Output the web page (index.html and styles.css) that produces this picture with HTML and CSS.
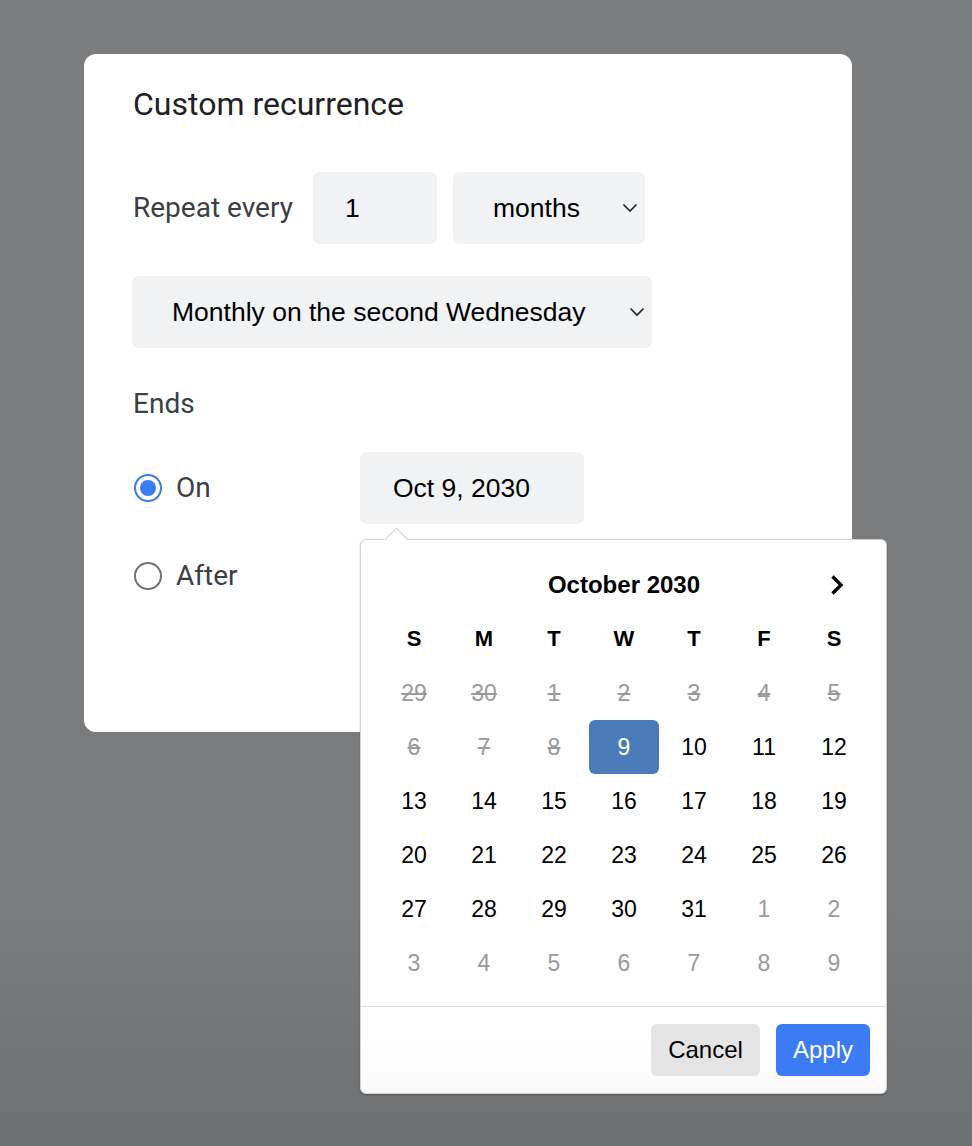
FILE: index.html
```html
<!DOCTYPE html>
<html>
<head>
<meta charset="utf-8">
<link rel="stylesheet" href="styles.css">
</head>
<body>
<div class="dialog">
  <h1 class="title">Custom recurrence</h1>
  <div class="repeat-row">
    <span class="label">Repeat every</span>
    <div class="field num">1</div>
    <div class="field select unit">months
      <svg class="chev" width="16" height="10" viewBox="0 0 16 10"><path d="M1.5 1.5 L8 8 L14.5 1.5" fill="none" stroke="#222" stroke-width="1.6"/></svg>
    </div>
  </div>
  <div class="field select pattern">Monthly on the second Wednesday
    <svg class="chev" width="16" height="10" viewBox="0 0 16 10"><path d="M1.5 1.5 L8 8 L14.5 1.5" fill="none" stroke="#222" stroke-width="1.6"/></svg>
  </div>
  <div class="ends label">Ends</div>
  <div class="end-row">
    <div class="radio-wrap"><span class="radio checked"></span><span class="label">On</span></div>
    <div class="date-anchor">
      <div class="field date">Oct 9, 2030</div>
      <div class="popup">
        <span class="arrow"></span>
        <div class="cal-head">
          <span class="month">October 2030</span>
          <svg class="next" width="16" height="22" viewBox="0 0 16 22"><path d="M3.5 2.5 L12 11 L3.5 19.5" fill="none" stroke="#000" stroke-width="3.4"/></svg>
        </div>
        <div class="grid">
          <span class="wd">S</span><span class="wd">M</span><span class="wd">T</span><span class="wd">W</span><span class="wd">T</span><span class="wd">F</span><span class="wd">S</span>
          <span class="d dis">29</span><span class="d dis">30</span><span class="d dis">1</span><span class="d dis">2</span><span class="d dis">3</span><span class="d dis">4</span><span class="d dis">5</span>
          <span class="d dis">6</span><span class="d dis">7</span><span class="d dis">8</span><span class="d sel">9</span><span class="d">10</span><span class="d">11</span><span class="d">12</span>
          <span class="d">13</span><span class="d">14</span><span class="d">15</span><span class="d">16</span><span class="d">17</span><span class="d">18</span><span class="d">19</span>
          <span class="d">20</span><span class="d">21</span><span class="d">22</span><span class="d">23</span><span class="d">24</span><span class="d">25</span><span class="d">26</span>
          <span class="d">27</span><span class="d">28</span><span class="d">29</span><span class="d">30</span><span class="d">31</span><span class="d out">1</span><span class="d out">2</span>
          <span class="d out">3</span><span class="d out">4</span><span class="d out">5</span><span class="d out">6</span><span class="d out">7</span><span class="d out">8</span><span class="d out">9</span>
        </div>
        <div class="foot">
          <button class="btn cancel">Cancel</button>
          <button class="btn apply">Apply</button>
        </div>
      </div>
    </div>
  </div>
  <div class="end-row after">
    <div class="radio-wrap"><span class="radio"></span><span class="label">After</span></div>
  </div>
</div>
</body>
</html>
```

FILE: styles.css
```css
html, body {
  margin: 0;
  padding: 0;
}
body {
  min-height: 1146px;
  background: linear-gradient(#7b7c7e 0%, #7a7b7d 80%, #6f7072 100%);
  font-family: Roboto, "Liberation Sans", sans-serif;
  padding: 54px 0 0 84px;
  box-sizing: border-box;
}
.dialog {
  width: 768px;
  height: 678px;
  box-sizing: border-box;
  background: #fff;
  border-radius: 12px;
  padding: 32px 48px 0 48px;
}
.title {
  margin: 0;
  font-size: 32px;
  font-weight: 400;
  line-height: 36px;
  color: #202124;
  padding-left: 1px;
}
.label {
  font-size: 28px;
  color: #3c4043;
  line-height: 32px;
}
.repeat-row {
  margin-top: 50px;
  display: flex;
  align-items: center;
  height: 72px;
}
.repeat-row .label {
  padding-left: 1px;
  width: 180px;
}
.field {
  background: #f1f2f4;
  border-radius: 7px;
  height: 72px;
  box-sizing: border-box;
  display: flex;
  align-items: center;
  font-family: "Liberation Sans", Arial, sans-serif;
  font-size: 26.5px;
  color: #000;
}
.num {
  width: 124px;
  padding-left: 32px;
}
.select {
  position: relative;
}
.chev {
  position: absolute;
  right: 7px;
  top: 31px;
}
.unit {
  margin-left: 16px;
  width: 192px;
  padding-left: 40px;
}
.pattern {
  margin-top: 32px;
  width: 520px;
  padding-left: 40px;
}
.ends {
  margin-top: 40px;
  padding-left: 1px;
}
.end-row {
  margin-top: 32px;
  display: flex;
  align-items: center;
  height: 72px;
}
.end-row.after {
  margin-top: 16px;
}
.radio-wrap {
  width: 228px;
  display: flex;
  align-items: center;
  gap: 14px;
  padding-left: 2px;
  box-sizing: border-box;
}
.radio {
  width: 28px;
  height: 28px;
  box-sizing: border-box;
  border-radius: 50%;
  border: 2px solid #727272;
  display: flex;
  align-items: center;
  justify-content: center;
}
.radio.checked {
  border-color: #3b7cf6;
}
.radio.checked::after {
  content: "";
  width: 16px;
  height: 16px;
  border-radius: 50%;
  background: #3b7cf6;
}
.date-anchor {
  position: relative;
}
.date {
  width: 224px;
  padding-left: 33px;
}
.popup {
  position: absolute;
  left: 0;
  top: 87px;
  width: 527px;
  height: 555px;
  box-sizing: border-box;
  background: linear-gradient(#fff 90%, #fafafa 100%);
  border: 1px solid #d2d2d2;
  border-radius: 6px;
  box-shadow: 0 1px 2px rgba(0,0,0,0.25);
  font-family: "Liberation Sans", Arial, sans-serif;
  z-index: 2;
}
.arrow {
  position: absolute;
  top: -9px;
  left: 27px;
  width: 16px;
  height: 16px;
  background: #fff;
  border-left: 1px solid #d2d2d2;
  border-top: 1px solid #d2d2d2;
  transform: rotate(45deg);
}
.cal-head {
  margin: 25px 18px 7px 18px;
  height: 40px;
  display: grid;
  grid-template-columns: repeat(7, 70px);
  align-items: center;
}
.month {
  grid-column: 2 / 7;
  text-align: center;
  font-weight: 700;
  font-size: 24px;
  color: #000;
}
.next {
  grid-column: 7;
  justify-self: center;
  margin-left: 6px;
}
.grid {
  margin: 0 18px;
  display: grid;
  grid-template-columns: repeat(7, 70px);
  grid-auto-rows: 54px;
}
.grid span {
  display: flex;
  align-items: center;
  justify-content: center;
}
.wd {
  font-weight: 700;
  font-size: 22px;
  color: #000;
}
.d {
  font-size: 23px;
  color: #000;
}
.d.dis {
  color: #9a9a9a;
  text-decoration: line-through;
}
.d.out {
  color: #9a9a9a;
}
.d.sel {
  background: #4a7bb8;
  color: #fff;
  border-radius: 6px;
}
.foot {
  margin-top: 16px;
  border-top: 1px solid #dcdcdc;
  padding: 17px 16px 0 0;
  display: flex;
  justify-content: flex-end;
  gap: 16px;
}
.btn {
  height: 52px;
  border: none;
  border-radius: 6px;
  font-family: "Liberation Sans", Arial, sans-serif;
  font-size: 24px;
  padding: 0;
}
.cancel {
  background: #e4e4e4;
  color: #000;
  width: 109px;
}
.apply {
  background: #3b7cf6;
  color: #fff;
  width: 94px;
}
```
